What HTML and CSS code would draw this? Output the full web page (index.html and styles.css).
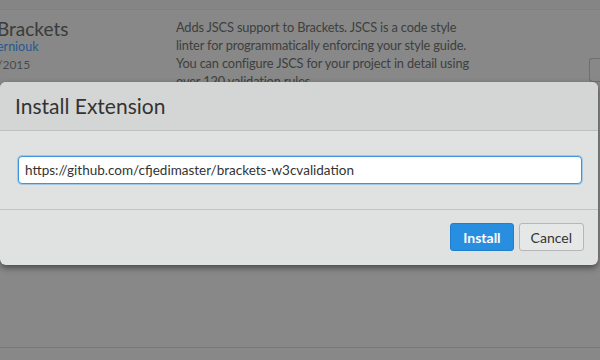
FILE: index.html
```html
<!DOCTYPE html>
<html>
<head>
<meta charset="utf-8">
<link rel="stylesheet" href="styles.css">
</head>
<body>
<div class="page">
  <div class="topbar"></div>
  <div class="row">
    <div class="info">
      <div class="name">Brackets</div>
      <div class="author">erniouk</div>
      <div class="date">/2015</div>
    </div>
    <div class="desc">Adds JSCS support to Brackets. JSCS is a code style linter for programmatically enforcing your style guide. You can configure JSCS for your project in detail using over 120 validation rules.</div>
    <div class="action"><span class="ghost-btn"></span></div>
  </div>
  <div class="spacer"></div>
  <div class="bottom-line"></div>
</div>
<div class="modal">
  <div class="modal-header">Install Extension</div>
  <div class="modal-body">
    <input class="url" type="text" value="https://github.com/cfjedimaster/brackets-w3cvalidation">
  </div>
  <div class="modal-footer">
    <button class="btn primary">Install</button>
    <button class="btn">Cancel</button>
  </div>
</div>
</body>
</html>
```
FILE: styles.css
```css
html, body {
  margin: 0;
  height: 100%;
  overflow: hidden;
}
body {
  background: #878887;
  font-family: "Lato", "Open Sans", sans-serif;
  color: #3e3f3e;
}
.page {
  display: flex;
  flex-direction: column;
  height: 360px;
}
.topbar {
  height: 9px;
  background: #848584;
  border-bottom: 1px solid #7f807f;
}
.row {
  display: flex;
  padding-top: 8px;
}
.info {
  width: 179px;
  margin-left: -3px;
  flex: none;
}
.name {
  font-size: 19px;
  line-height: 22px;
  color: #3a3b3a;
}
.author {
  margin-top: -2px;
  font-size: 12.5px;
  line-height: 18px;
  color: #245a91;
}
.date {
  font-size: 12px;
  line-height: 18px;
  color: #4a4b4a;
}
.desc {
  width: 305px;
  flex: none;
  font-size: 12.8px;
  letter-spacing: -0.15px;
  line-height: 18px;
  color: #3e3f3e;
  max-height: 80px;
}
.action {
  flex: 1;
  display: flex;
  justify-content: flex-end;
  padding-top: 40px;
}
.ghost-btn {
  width: 10px;
  height: 22px;
  border: 1px solid #6e6f6e;
  border-right: none;
  border-radius: 3px 0 0 3px;
}
.spacer { flex: 1; }
.bottom-line {
  height: 1px;
  background: #777877;
  margin-bottom: 12px;
}
.modal {
  position: absolute;
  left: 0;
  top: 82px;
  width: 598px;
  background: #dfe2e1;
  border-radius: 6px;
  box-shadow: 0 3px 6px rgba(0,0,0,0.45);
  overflow: hidden;
  font-family: "Lato", "Open Sans", sans-serif;
}
.modal-header {
  height: 48px;
  line-height: 48px;
  padding-left: 15px;
  font-size: 21px;
  color: #333;
  background: #d4d6d5;
  border-bottom: 1px solid #bfc1c0;
}
.modal-body {
  padding: 25px 16px 25px 18px;
  border-bottom: 1px solid #c3c5c4;
}
.url {
  display: block;
  box-sizing: border-box;
  width: 100%;
  height: 28px;
  margin: 0;
  padding: 0 6px;
  border: 1px solid #3d95e0;
  border-radius: 4px;
  background: #fff;
  box-shadow: 0 0 0 1px rgba(61,149,224,0.35);
  font-family: inherit;
  font-size: 13.5px;
  color: #333;
  outline: none;
}
.modal-footer {
  display: flex;
  justify-content: flex-end;
  gap: 5px;
  padding: 13px 14px 14px;
}
.btn {
  height: 28px;
  box-sizing: border-box;
  padding: 0 11px;
  border: 1px solid #b5b7b6;
  border-radius: 3px;
  background: #e6e8e7;
  font-family: inherit;
  font-size: 14px;
  color: #333;
}
.btn.primary {
  background: #288edf;
  border-color: #1f7fcc;
  color: #fff;
  font-weight: bold;
  padding: 0 12px;
}
```
